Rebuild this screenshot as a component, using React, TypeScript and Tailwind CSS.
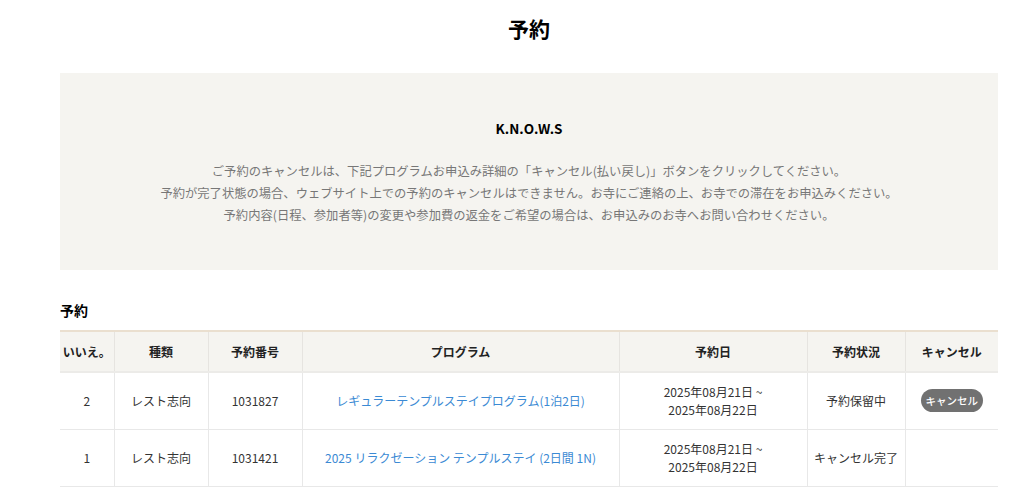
import React from "react";

const rows = [
  {
    no: "2",
    type: "レスト志向",
    id: "1031827",
    program: "レギュラーテンプルステイプログラム(1泊2日)",
    from: "2025年08月21日 ~",
    to: "2025年08月22日",
    status: "予約保留中",
    cancel: true,
  },
  {
    no: "1",
    type: "レスト志向",
    id: "1031421",
    program: "2025 リラクゼーション テンプルステイ (2日間 1N)",
    from: "2025年08月21日 ~",
    to: "2025年08月22日",
    status: "キャンセル完了",
    cancel: false,
  },
];

const headers = ["いいえ。", "種類", "予約番号", "プログラム", "予約日", "予約状況", "キャンセル"];
const widths = ["w-[54px]", "w-[94px]", "w-[94px]", "w-[317px]", "w-[188px]", "w-[98px]", "w-[93px]"];

export default function App() {
  return (
    <div className="min-h-screen w-[1058px] bg-white font-['Noto_Sans_CJK_JP',sans-serif] text-[#222]">
      <h1 className="pt-[12px] text-center text-[21px] leading-[32px] font-bold text-black">予約</h1>

      <div className="mx-[60px] mt-[29px] h-[197px] bg-[#f5f4f0] pt-[45px] text-center">
        <p className="text-[13.5px] leading-[20px] font-bold text-black">K.N.O.W.S</p>
        <div className="mt-[22px] text-[12.3px] leading-[22px] text-[#777]">
          <p>ご予約のキャンセルは、下記プログラムお申込み詳細の「キャンセル(払い戻し)」ボタンをクリックしてください。</p>
          <p>予約が完了状態の場合、ウェブサイト上での予約のキャンセルはできません。お寺にご連絡の上、お寺での滞在をお申込みください。</p>
          <p>予約内容(日程、参加者等)の変更や参加費の返金をご希望の場合は、お申込みのお寺へお問い合わせください。</p>
        </div>
      </div>

      <div className="mx-[60px] mt-[30px]">
        <h2 className="text-[14px] leading-[20px] font-bold text-black">予約</h2>
        <table className="mt-[10px] w-full table-fixed border-collapse text-[12px] text-[#333]">
          <colgroup>
            {widths.map((w, i) => (
              <col key={i} className={w} />
            ))}
          </colgroup>
          <thead>
            <tr className="h-[41px] border-t-2 border-[#eadfcf] bg-[#f5f4f0]">
              {headers.map((h, i) => (
                <th
                  key={h}
                  className={`whitespace-nowrap px-0.5 font-bold text-[#222] border-b-2 border-[#ecebe8] ${i > 0 ? "border-l border-l-[#e6e4e0]" : ""}`}
                >
                  {h}
                </th>
              ))}
            </tr>
          </thead>
          <tbody>
            {rows.map((r) => (
              <tr key={r.id} className="h-[57px] border-b border-[#e8e8e8] text-center">
                <td>{r.no}</td>
                <td className="border-l border-[#e8e8e8]">{r.type}</td>
                <td className="border-l border-[#e8e8e8]">{r.id}</td>
                <td className="border-l border-[#e8e8e8] text-[#3b8ad4]">{r.program}</td>
                <td className="border-l border-[#e8e8e8] leading-[18px]">
                  {r.from}
                  <br />
                  {r.to}
                </td>
                <td className="border-l border-[#e8e8e8]">{r.status}</td>
                <td className="border-l border-[#e8e8e8]">
                  {r.cancel && (
                    <span className="inline-block rounded-full bg-[#717171] px-[5px] py-[2px] text-[10.5px] leading-[19px] font-medium text-white">
                      キャンセル
                    </span>
                  )}
                </td>
              </tr>
            ))}
          </tbody>
        </table>
      </div>
    </div>
  );
}
